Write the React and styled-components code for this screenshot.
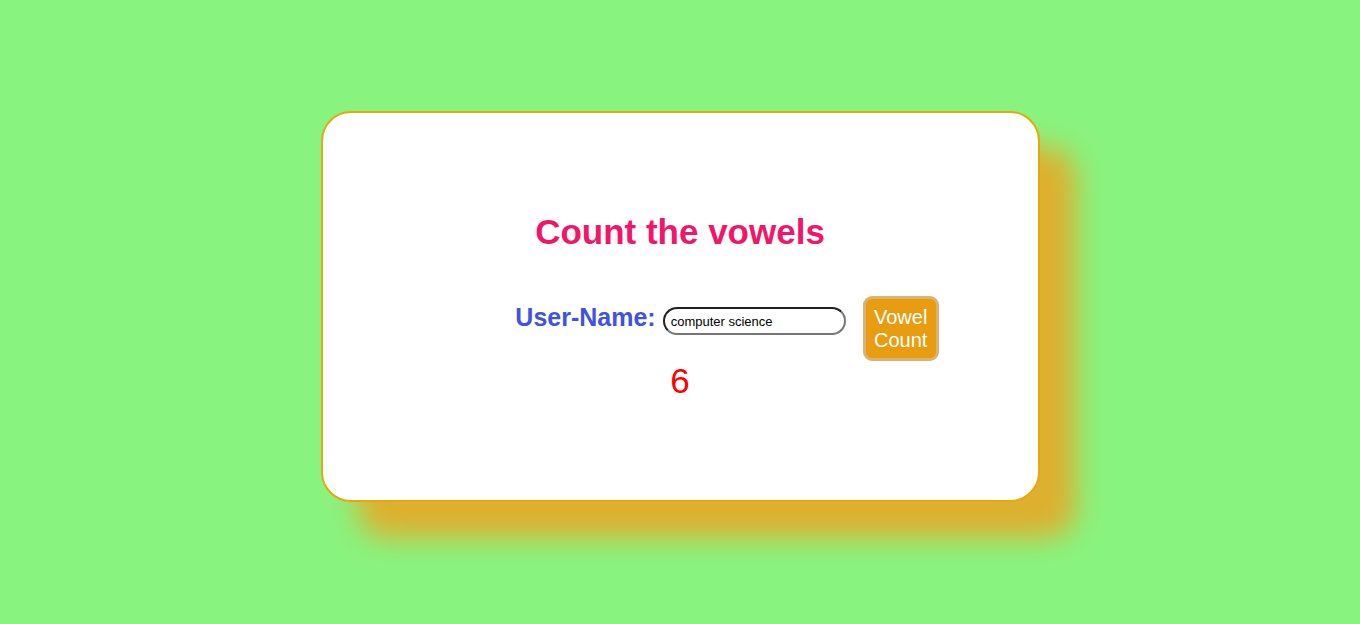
import styled, { createGlobalStyle } from 'styled-components';

const GlobalStyle = createGlobalStyle`
  html, body {
    margin: 0;
    background: #89f37f;
    font-family: "Liberation Sans", Arial, sans-serif;
  }
`;

function App() {
  return (
    <Page>
      <GlobalStyle />
      <Card>
        <Title>Count the vowels</Title>
        <Row>
          <Label>User-Name:</Label>
          <Input type='text' defaultValue='computer science' />
          <Button>Vowel<br />Count</Button>
        </Row>
        <Result>6</Result>
      </Card>
    </Page>
  );
}

export default App;

const Page = styled.div`
  height: 624px;
  display: flex;
  justify-content: center;
  padding-top: 111px;
  box-sizing: border-box;
`;
const Card = styled.div`
  width: 719px;
  height: 391px;
  box-sizing: border-box;
  background: #fff;
  border: 2px solid #e7a80c;
  border-radius: 30px;
  box-shadow: 36px 36px 28px #deb030;
  display: flex;
  flex-direction: column;
  align-items: center;
  padding-top: 97px;
`;
const Title = styled.h1`
  margin: 0;
  font-size: 35px;
  font-weight: bold;
  color: #f0176a;
  line-height: 44px;
`;
const Row = styled.div`
  display: flex;
  align-items: flex-start;
  margin-top: 42px;
  margin-left: 94px;
`;
const Label = styled.span`
  margin-top: 7px;
  font-size: 25px;
  line-height: 29px;
  font-weight: bold;
  color: #3f52e0;
`;
const Input = styled.input`
  margin: 11px 0 0 7px;
  width: 183px;
  height: 28px;
  box-sizing: border-box;
  border: 2px inset #767676;
  border-radius: 14px;
  padding: 0 6px;
  font-family: "Liberation Sans", Arial, sans-serif;
  font-size: 13px;
  color: #000;
  outline: none;
`;
const Button = styled.button`
  margin-left: 17px;
  width: 76px;
  height: 65px;
  box-sizing: border-box;
  background: #e89c10;
  border: 3px solid #d9b274;
  border-radius: 9px;
  color: #fff;
  font-family: "Liberation Sans", Arial, sans-serif;
  font-size: 20px;
  line-height: 23px;
  padding: 0;
`;
const Result = styled.div`
  margin-top: 0;
  font-size: 35px;
  color: #f00;
  line-height: 40px;
`;
